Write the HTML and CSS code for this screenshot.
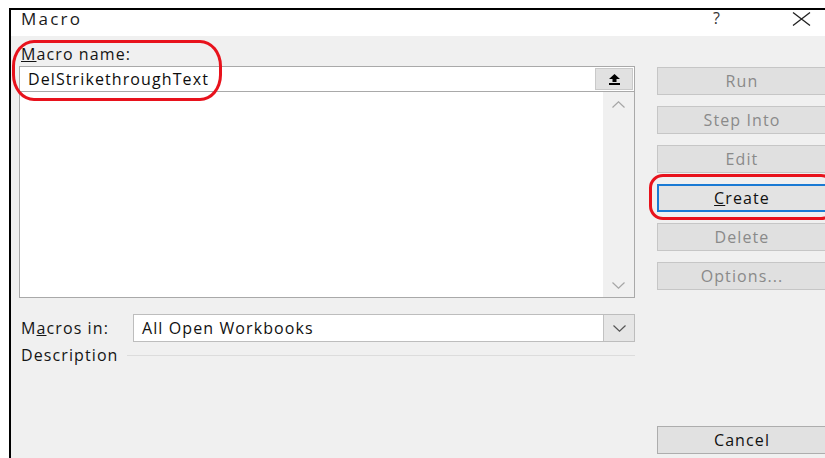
FILE: index.html
```html
<!DOCTYPE html>
<html lang="en">
<head>
<meta charset="utf-8">
<title>Macro</title>
<link rel="stylesheet" href="styles.css">
</head>
<body>
<div class="dialog">
  <div class="titlebar">
    <span class="title">Macro</span>
    <span class="help">?</span>
    <svg class="close" width="19" height="14" viewBox="0 0 19 14"><path d="M1 0.5 L18 13.5 M18 0.5 L1 13.5" stroke="#222" stroke-width="1.3" fill="none"/></svg>
  </div>
  <div class="content">
    <div class="left">
      <div class="label"><u>M</u>acro name:</div>
      <div class="name-field">
        <span class="name-value">DelStrikethroughText</span>
        <span class="pick">
          <svg width="11" height="11" viewBox="0 0 11 11"><path d="M5.5 0 L11 5 L7.5 5 L7.5 8 L3.5 8 L3.5 5 L0 5 Z" fill="#000"/><rect x="0" y="9" width="11" height="2" fill="#000"/></svg>
        </span>
      </div>
      <div class="list">
        <div class="list-body"></div>
        <div class="scrollbar">
          <svg width="13" height="7" viewBox="0 0 13 7"><path d="M0.5 6.5 L6.5 0.8 L12.5 6.5" stroke="#a6a6a6" stroke-width="1.2" fill="none"/></svg>
          <svg width="13" height="7" viewBox="0 0 13 7"><path d="M0.5 0.5 L6.5 6.2 L12.5 0.5" stroke="#a6a6a6" stroke-width="1.2" fill="none"/></svg>
        </div>
      </div>
      <div class="macros-in">
        <span class="label">M<u>a</u>cros in:</span>
        <div class="select">
          <span class="select-value">All Open Workbooks</span>
          <span class="dd">
            <svg width="13" height="7" viewBox="0 0 13 7"><path d="M0.5 0.5 L6.5 6.2 L12.5 0.5" stroke="#555" stroke-width="1.2" fill="none"/></svg>
          </span>
        </div>
      </div>
      <div class="description">
        <span class="label">Description</span>
        <span class="rule"></span>
      </div>
    </div>
    <div class="buttons">
      <div class="btn disabled">Run</div>
      <div class="btn disabled">Step Into</div>
      <div class="btn disabled">Edit</div>
      <div class="btn focused"><u>C</u>reate</div>
      <div class="btn disabled">Delete</div>
      <div class="btn disabled">Options...</div>
      <div class="btn cancel">Cancel</div>
    </div>
  </div>
  <div class="mark mark-name"></div>
  <div class="mark mark-create"></div>
</div>
</body>
</html>
```
FILE: styles.css
```css
* { box-sizing: border-box; }

html, body {
  margin: 0;
  padding: 0;
  background: #fff;
  overflow: hidden;
}

body {
  font-family: "Open Sans", "Noto Sans", sans-serif;
  font-size: 16px;
  font-weight: 400;
  letter-spacing: 1.1px;
  color: #111;
  width: 825px;
  height: 458px;
}

.dialog {
  position: relative;
  margin: 8px 0 0 9px;
  width: 820px;
  height: 450px;
  border-top: 2px solid #000;
  border-left: 2px solid #000;
  background: #f0f0f0;
  display: flex;
  flex-direction: column;
}

.titlebar {
  height: 26px;
  background: #fff;
  display: flex;
  align-items: center;
  flex-shrink: 0;
}

.title {
  font-size: 17px;
  margin-left: 10px;
  margin-top: -9px;
  color: #1a1a1a;
  letter-spacing: 2.2px;
}

.help {
  margin-left: auto;
  margin-top: -10px;
  color: #333;
  letter-spacing: 0;
}

.close {
  margin: -8px 18px 0 72px;
}

.content {
  flex: 1;
  display: flex;
  padding: 8px 0 4px 8px;
}

.left {
  width: 616px;
  display: flex;
  flex-direction: column;
}

.label {
  line-height: 20px;
  padding-left: 2px;
  color: #151515;
}

.name-field {
  margin-top: 2px;
  height: 26px;
  background: #fff;
  border: 1px solid #a9a9a9;
  display: flex;
  align-items: center;
}

.name-value {
  padding-left: 8px;
  color: #0d0d0d;
}

.pick {
  margin-left: auto;
  width: 38px;
  height: 22px;
  margin-right: 1px;
  background: #e1e1e1;
  border: 1px solid #c9c9c9;
  display: flex;
  align-items: center;
  justify-content: center;
}

.list {
  margin-top: -1px;
  height: 207px;
  border: 1px solid #a9a9a9;
  background: #fff;
  display: flex;
}

.list-body { flex: 1; }

.scrollbar {
  width: 31px;
  background: #f0f0f0;
  display: flex;
  flex-direction: column;
  align-items: center;
  justify-content: space-between;
  padding: 9px 0 8px;
}

.macros-in {
  margin-top: 16px;
  display: flex;
  align-items: center;
}

.macros-in .label { width: 114px; }

.select {
  flex: 1;
  height: 28px;
  background: #fff;
  border: 1px solid #bdbdbd;
  display: flex;
  align-items: center;
}

.select-value {
  padding-left: 8px;
  color: #111;
}

.dd {
  margin-left: auto;
  width: 31px;
  height: 26px;
  background: #e6e6e6;
  border-left: 1px solid #c2c2c2;
  display: flex;
  align-items: center;
  justify-content: center;
}

.description {
  margin-top: 3px;
  display: flex;
  align-items: center;
}

.rule {
  flex: 1;
  margin-left: 8px;
  height: 1px;
  background: #dcdcdc;
}

.buttons {
  margin-left: 22px;
  width: 170px;
  display: flex;
  flex-direction: column;
  gap: 11px;
  padding-top: 23px;
}

.btn {
  height: 28px;
  background: #e1e1e1;
  border: 1px solid #adadad;
  display: flex;
  align-items: center;
  justify-content: center;
  color: #111;
}

.btn.disabled {
  background: #e0e0e0;
  border-color: #c6c6c6;
  color: #8a8a8a;
}

.btn.focused {
  border: 2px solid #1a7ad4;
  background: #e3e3e3;
}

.btn.cancel { margin-top: auto; }

.mark {
  position: absolute;
  border: 3px solid #e8121c;
}

.mark-name {
  left: 1px;
  top: 30px;
  width: 210px;
  height: 61px;
  border-radius: 22px / 26px;
}

.mark-create {
  left: 638px;
  top: 164px;
  width: 186px;
  height: 46px;
  border-radius: 14px;
}
```
